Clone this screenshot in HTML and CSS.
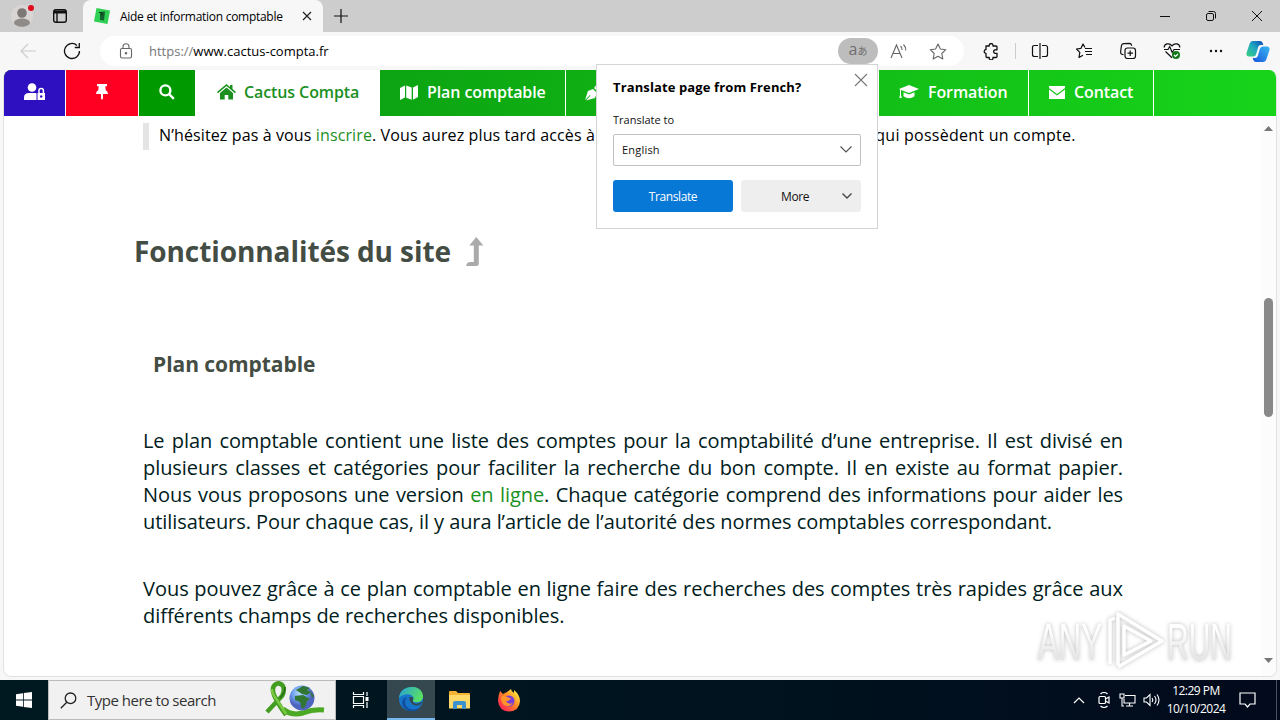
FILE: index.html
```html
<!DOCTYPE html>
<html lang="fr">
<head>
    <meta charset="UTF-8">
    <meta name="viewport" content="width=device-width, initial-scale=1.0">
    <title>Aide et information comptable</title>
    <link rel="stylesheet" href="styles.css">
</head>
<body>
    <!-- tabs -->
    <div class="tab-strip">
        <div class="profile">
            <svg width="26" height="30" viewBox="0 0 26 30"><circle cx="12" cy="15" r="11" fill="#d8d5d4"/><circle cx="12" cy="12" r="4.800" fill="#7d7876"/><path d="M4 22c0-6 16-6 16 0-2 5-14 5-16 0z" fill="#8f8b89"/><circle cx="21" cy="7" r="3" fill="#e00b1c"/></svg>
        </div>
        <div class="tab-menu">
            <svg width="16" height="16" viewBox="0 0 16 16" fill="none" stroke="#111" stroke-width="1.4"><rect x="1.7" y="1.7" width="12.6" height="12.6" rx="2.2"/><path d="M2 4h12" stroke-width="3"/><path d="M5 5v9"/></svg>
        </div>
        <div class="tab">
            <svg width="16" height="16" viewBox="0 0 16 16"><path d="M2.5 0L16 2.5 13.5 16 0 13.5z" fill="#2fd054"/><path d="M6 4l5-.5-1 9-4-.5z" fill="#12602b"/><path d="M5 4.5h3v3" fill="none" stroke="#0b3c1b"/></svg>
            <span class="tab-title">Aide et information comptable</span>
            <svg class="tab-close" width="10" height="10" viewBox="0 0 10 10" stroke="#222" stroke-width="1.2"><path d="M1 1l8 8M9 1l-8 8"/></svg>
        </div>
        <svg class="new-tab" width="14" height="14" viewBox="0 0 14 14" stroke="#111" stroke-width="1.2"><path d="M7 0v14M0 7h14"/></svg>
        <div class="window-buttons">
            <svg width="12" height="12" viewBox="0 0 12 12" stroke="#111"><path d="M1 6.500h10"/></svg>
            <svg width="12" height="12" viewBox="0 0 12 12" fill="none" stroke="#111"><rect x="1.500" y="3.500" width="7" height="7" rx="1.500"/><path d="M3.500 1.500h5q2 0 2 2v5"/></svg>
            <svg width="12" height="12" viewBox="0 0 12 12" stroke="#111"><path d="M1 1l10 10M11 1L1 11"/></svg>
        </div>
    </div>

    <!-- address bar -->
    <div class="toolbar">
        <div class="tool back"><svg width="18" height="16" viewBox="0 0 18 16" fill="none" stroke="#ccc" stroke-width="1.2"><path d="M17 8H2M9 1L2 8l7 7"/></svg></div>
        <div class="tool reload"><svg width="18" height="18" viewBox="0 0 18 18" fill="none" stroke="#111" stroke-width="1.3"><path d="M16.500 9A7.500 7.500 0 1 1 14 3.400M16.300 1v4.500h-4.500"/></svg></div>
        <div class="omnibox">
            <svg class="lock" width="14" height="16" viewBox="0 0 14 16" fill="none" stroke="#666" stroke-width="1.1"><rect x="1.500" y="5.500" width="11" height="9.500" rx="1.500"/><path d="M4 5.500V3.800a3 3 0 0 1 6 0v1.700"/><circle cx="7" cy="10.300" r=".7" fill="#666"/></svg>
            <span class="url"><span>https://</span>www.cactus-compta.fr</span>
            <div class="translate-pill"><span class="latin">a</span><span class="kana">あ</span></div>
            <svg class="read" width="18" height="16" viewBox="0 0 18 16" fill="none" stroke="#666" stroke-width="1.100"><path d="M1 15L6.500 2 12 15M3 10.500h7M10.500 3q1.700 1.500 1.500 4M13.500 1.500q2.500 2.500 2.300 6"/></svg>
            <svg class="star" width="18" height="17" viewBox="0 0 18 17" fill="none" stroke="#666" stroke-width="1.100" stroke-linejoin="round"><path d="M9 1l2.400 5 5.400.7-4 3.800 1 5.400L9 13.300 4.200 15.900l1-5.400-4-3.800 5.400-.7z"/></svg>
        </div>
        <div class="tool puzzle"><svg width="16" height="17" viewBox="0 0 16 17" fill="none" stroke="#111" stroke-width="1.300" stroke-linejoin="round"><path d="M3 3h3.300a1.900 1.900 0 1 1 3.600 0H13q1 0 1 1v2.800h-1.200a1.800 1.800 0 1 0 0 3.500H14V13.500q0 1-1 1H9.900a1.900 1.900 0 1 1-3.600 0H4q-1 0-1-1v-3.200a1.800 1.800 0 1 1 0-3.600z"/></svg></div>
        <div class="separator"></div>
        <div class="tool"><svg width="18" height="16" viewBox="0 0 18 16" fill="none" stroke="#111" stroke-width="1.200"><path d="M9 0v16M7 2.500H3.500q-2 0-2 2v7q0 2 2 2H7M11 2.500h3.500q2 0 2 2v7q0 2-2 2H11"/></svg></div>
        <div class="tool"><svg width="18" height="16" viewBox="0 0 18 16" fill="none" stroke="#111" stroke-width="1.200" stroke-linejoin="round"><path d="M10 4.500L8 1 6 5.300l-4.500.7 3.300 3.300L4 14.500l4-2.300M10 5.500h7M10 8.500h7M11 11.500h6"/></svg></div>
        <div class="tool"><svg width="18" height="18" viewBox="0 0 18 18" fill="none" stroke="#111" stroke-width="1.200"><rect x="6" y="6" width="10.500" height="10.500" rx="2.500"/><path d="M11.200 8.500v5.500M8.500 11.200H14M4.500 12.800l-1.300-.4q-1.700-.6-1.600-2.400L2.400 3.800q.3-2 2.200-2.200l5.800-.3q2 0 2.300 2.400"/></svg></div>
        <div class="tool"><svg width="18" height="18" viewBox="0 0 18 18" fill="none" stroke="#111" stroke-width="1.200"><path d="M1 7.500h4l1.700-3 2.500 6 1.800-3h6M1.200 5.500C1 1.500 6.500.5 9 3.800 11.500.5 17 1.500 16.800 5.500M2.500 9.500L9 15.800"/><circle cx="13" cy="13" r="4" fill="#117a18" stroke="none"/><path d="M11 13l1.500 1.500L15 12" stroke="#fff"/></svg></div>
        <div class="tool"><svg width="14" height="4" viewBox="0 0 14 4" fill="#111"><circle cx="2" cy="2" r="1.200"/><circle cx="7" cy="2" r="1.200"/><circle cx="12" cy="2" r="1.200"/></svg></div>
        <div class="tool copilot">
            <svg width="24" height="23" viewBox="0 0 24 23">
                <defs>
                    <linearGradient id="cp1" x1="0" y1="1" x2="1" y2="0"><stop offset="0" stop-color="#3bd17d"/><stop offset=".5" stop-color="#20a9bf"/><stop offset="1" stop-color="#0a49b8"/></linearGradient>
                    <linearGradient id="cp2" x1="0" y1="1" x2="1" y2="0"><stop offset="0" stop-color="#1b55dd"/><stop offset="1" stop-color="#35b8f0"/></linearGradient>
                </defs>
                <path d="M7 1h7q2 0 2.700 2l.6 2h-2.500q-2 0-2.600 2l-2 7q-.7 2.500-3 2.500H3q-3 0-2.500-3.500L3.500 4Q4.500 1 7 1z" fill="url(#cp1)"/>
                <path d="M17 22h-7q-2 0-2.700-2l-.6-2h2.500q2 0 2.600-2l2-7q.7-2.500 3-2.500H21q3 0 2.500 3.500L20.500 19q-1 3-3.500 3z" fill="url(#cp2)"/>
            </svg>
        </div>
    </div>

    <!-- website -->
    <div class="page">
        <nav class="menu">
            <a class="item account"><svg width="22" height="18" viewBox="0 0 22 18" fill="#fff"><circle cx="8" cy="4.500" r="4.300"/><path d="M0 17v-2.500Q0 10 5 10h6q1 0 1.500.3V17z"/><path d="M13.500 10h7.500v7h-7.500z"/><path d="M15 10V7.500q0-2 2.200-2t2.200 2V10" fill="none" stroke="#fff" stroke-width="1.500"/><circle cx="17.200" cy="13.500" r="1.200" fill="#2f10c0"/></svg></a>
            <a class="item pin"><svg width="12" height="16" viewBox="0 0 12 16" fill="#fff"><path d="M1 0h10v2.300H9.300L9.700 6Q12 7.300 12 10H7v4.500L6 16l-1-1.500V10H0q0-2.700 2.300-4l.4-3.700H1z"/></svg></a>
            <a class="item search"><svg width="16" height="16" viewBox="0 0 17 17" fill="none" stroke="#fff" stroke-width="2.500"><circle cx="6.800" cy="6.800" r="5.300"/><path d="M10.500 10.500l5.300 5.300"/></svg></a>
            <a class="item home"><svg width="19" height="16" viewBox="0 0 19 16" fill="#1b901f"><path d="M0 8l9.500-8L13 3V1h2.500v4L19 8l-1 1.200L9.500 2 1 9.200z"/><path d="M3 9l6.500-5.400L16 9v6.500h-4.700V11H7.700v4.500H3z"/></svg><span>Cactus Compta</span></a>
            <a class="item plan"><svg width="18" height="15" viewBox="0 0 18 15" fill="#fff"><path d="M0 3l5-2.500v12L0 15zM6.200.5l5.500 2v12.200l-5.500-2zM13 2.500L18 0v12l-5 2.700z"/></svg><span>Plan comptable</span></a>
            <a class="item write"><svg width="18" height="18" viewBox="0 0 18 18" fill="#fff"><path d="M0 17L3 8l5-2 4 4-2 5-9 2.500 4.500-5L5 12zM9 5l3-4 5 5-4 3z"/></svg></a>
            <a class="item training"><svg width="20" height="14" viewBox="0 0 20 14" fill="#fff"><path d="M10 0l10 4-10 4L2 5v5l.8 3H.3L1 10V4.500L0 4z"/><path d="M4.500 7.200L10 9.400l5.500-2.200v4q-5.500 4-11 0z"/></svg><span>Formation</span></a>
            <a class="item contact"><svg width="16" height="13" viewBox="0 0 16 13" fill="#fff"><path d="M0 0h16v2L8 8 0 2z"/><path d="M0 3.500L8 9.500l8-6V13H0z"/></svg><span>Contact</span></a>
        </nav>

        <div class="content">
            <blockquote>N’hésitez pas à vous <a>inscrire</a>. Vous aurez plus tard accès à <span class="quote-end">qui possèdent un compte.</span></blockquote>
            <h2>Fonctionnalités du site <svg width="18" height="29" viewBox="0 0 18 29" fill="#aaa"><path d="M10.300 0L17.300 8.500h-4.500V26.500q0 2.500-2.500 2.500H0q1-4 4-4h3.800V8.500H3.300z"/></svg></h2>
            <h3>Plan comptable</h3>
            <p>Le plan comptable contient une liste des comptes pour la comptabilité d’une entreprise. Il est divisé en plusieurs classes et catégories pour faciliter la recherche du bon compte. Il en existe au format papier. Nous vous proposons une version <a>en ligne</a>. Chaque catégorie comprend des informations pour aider les utilisateurs. Pour chaque cas, il y aura l’article de l’autorité des normes comptables correspondant.</p>
            <p>Vous pouvez grâce à ce plan comptable en ligne faire des recherches des comptes très rapides grâce aux différents champs de recherches disponibles.</p>
        </div>

        <div class="scrollbar">
            <svg width="9" height="5" viewBox="0 0 9 5" fill="#777"><path d="M4.500 0L9 5H0z"/></svg>
            <div class="thumb"></div>
            <svg width="9" height="5" viewBox="0 0 9 5" fill="#777"><path d="M0 0h9L4.500 5z"/></svg>
        </div>
    </div>

    <!-- translate popup -->
    <div class="popup">
        <svg class="popup-close" width="14" height="14" viewBox="0 0 14 14" stroke="#777" stroke-width="1.100"><path d="M1 1l12 12M13 1L1 13"/></svg>
        <strong>Translate page from French?</strong>
        <label>Translate to</label>
        <div class="select"><span>English</span><svg width="12" height="7" viewBox="0 0 12 7" fill="none" stroke="#555" stroke-width="1.200"><path d="M.5.500L6 6 11.500.500"/></svg></div>
        <div class="popup-buttons">
            <div class="button primary">Translate</div>
            <div class="button more"><span>More</span><svg width="10" height="6" viewBox="0 0 10 6" fill="none" stroke="#444" stroke-width="1.400"><path d="M.5.500L5 5 9.500.500"/></svg></div>
        </div>
    </div>

    <svg class="watermark" width="204" height="66" viewBox="0 0 204 66">
        <defs><linearGradient id="wm" x1="0" y1="0" x2="0" y2="1"><stop offset=".3" stop-color="#fff"/><stop offset=".6" stop-color="#eee"/><stop offset="1" stop-color="#dcdcdc"/></linearGradient></defs>
        <text x="4" y="52" textLength="64" lengthAdjust="spacingAndGlyphs">ANY</text>
        <path d="M76 56V12L81 10M84 57V6l44 27-44 26M90 47V18l27 15z" fill="none" stroke="#fff" stroke-width="3.500" stroke-linejoin="round"/>
        <text x="133" y="52" textLength="65" lengthAdjust="spacingAndGlyphs">RUN</text>
    </svg>

    <!-- taskbar -->
    <div class="taskbar">
        <div class="start"><svg width="16" height="16" viewBox="0 0 16 16" fill="#fff"><path d="M0 2.200l7-1v6.400H0zM7.800 1.100L16 0v7.600H7.800zM0 8.400h7v6.400l-7-1zM7.800 8.400H16V16l-8.200-1.100z"/></svg></div>
        <div class="search-box">
            <svg width="17" height="17" viewBox="0 0 17 17" fill="none" stroke="#222" stroke-width="1.300"><circle cx="10.500" cy="6.300" r="5.300"/><path d="M6.800 10.200L.8 16.200"/></svg>
            <span>Type here to search</span>
            <svg class="ribbon" width="62" height="38" viewBox="0 0 62 38">
                <defs><radialGradient id="globe" cx=".4" cy=".3"><stop offset="0" stop-color="#b8dcff"/><stop offset=".6" stop-color="#6b9cec"/><stop offset="1" stop-color="#4f65bd"/></radialGradient></defs>
                <path d="M2 31L17 15Q20 10 18 5 15 1 11 3 6 6 9 14 13 23 21 34" fill="none" stroke="#439d20" stroke-width="4.500"/>
                <path d="M18 28q8 7 20 4 10-4 21-3" fill="none" stroke="#4ba923" stroke-width="5"/>
                <path d="M7 8q0 5 5 11l9 14" fill="none" stroke="#7ac943" stroke-width="2.500"/>
                <path d="M20 6q0 6-5 11" fill="none" stroke="#286d15" stroke-width="1.500"/>
                <circle cx="37" cy="17" r="12.500" fill="url(#globe)"/>
                <path d="M31 9l7-4 7 2-3 2 4 2-4 3-5-1zM30 15l8-1 7 4-3 2-2 6-3 2-2-7-5-2zM45 10l4 5-2 2z" fill="#327633"/>
            </svg>
        </div>
        <div class="task task-view"><svg width="18" height="16" viewBox="0 0 18 16" fill="none" stroke="#fff" stroke-width="1.200"><path d="M1.500 0v2.500h10V0M1.500 16v-2.500h10V16M1.500 4.500h10v7h-10zM15 0v4M15 10v6"/><path d="M15 5v4" stroke-width="3"/></svg></div>
        <div class="task active">
            <svg width="24" height="24" viewBox="0 0 24 24">
                <defs><linearGradient id="eg" x1="0" y1="0" x2="1" y2=".4"><stop offset="0" stop-color="#249fd8"/><stop offset="1" stop-color="#58df66"/></linearGradient></defs>
                <circle cx="12" cy="12" r="12" fill="#1774cb"/>
                <path d="M0 11C1-3 23-4 24 9c.3 5-4 7-8.500 6-3-.5-1-2-1-4C14 7 5 5 0 11z" fill="url(#eg)"/>
                <path d="M8 10c-6 8 4 17 13 10-4 7-14 5-17-1-2-5 0-8 4-9z" fill="#124f9e"/>
                <path d="M10 11q2-2 4.500 0-2 4 1 5.500 4 1 7.500-2-.5 4-6 4-6-1-7-7.500z" fill="#36484f"/>
            </svg>
        </div>
        <div class="task">
            <svg width="22" height="18" viewBox="0 0 22 18"><path d="M0 1q0-1 1-1h6l2 2h11q1 0 1 1v14H0z" fill="#f4b333"/><path d="M0 4h21v13.500H0z" fill="#ffda69"/><path d="M4 18v-6q0-2 2-2h9q2 0 2 2v6h-4v-4H8v4z" fill="#3c92cf"/></svg>
        </div>
        <div class="task">
            <svg width="24" height="24" viewBox="0 0 24 24">
                <defs><linearGradient id="ff" x1="1" y1="0" x2="0" y2="1"><stop offset=".1" stop-color="#fff044"/><stop offset=".45" stop-color="#ff8a25"/><stop offset=".8" stop-color="#ff334e"/></linearGradient></defs>
                <path d="M3 3l3 3 4-2 4-3q0 2 3 4V2q6 5 6 11-.5 10-11 10.500Q2 23 1 13q0-5 2-10z" fill="url(#ff)"/>
                <circle cx="12" cy="13" r="5.500" fill="#773ed8"/><path d="M4 9q3-3 6 0 2 1 4 1-1 3-5 3 2 4 7 2-3 5-9 2-3-3-3-8z" fill="#ff942a"/>
            </svg>
        </div>
        <div class="tray">
            <svg width="12" height="8" viewBox="0 0 12 8" fill="none" stroke="#fff" stroke-width="1.200"><path d="M1 7l5-5 5 5"/></svg>
            <svg width="12" height="16" viewBox="0 0 12 16" fill="none" stroke="#fff" stroke-width="1.200"><rect x="1" y="4.500" width="6.500" height="7" rx="1"/><path d="M7.500 7L11 5v6L7.500 9M2.500 2Q6-1 9.500 2M2.500 14q3.500 3 7 0"/></svg>
            <svg width="17" height="14" viewBox="0 0 17 14" fill="none" stroke="#fff" stroke-width="1.100"><path d="M6 2.500h10v7.500H5V6M10.500 10v3M7 13h7M1 1h4v4H1zM3 5v8h2"/></svg>
            <svg width="17" height="14" viewBox="0 0 17 14" fill="none" stroke="#fff" stroke-width="1.100"><path d="M1 5h2.500L7 1.500v11L3.500 9H1zM9 5q1.500 2 0 4M11.500 3q3 4 0 8M14 1.500q4 5.500 0 11"/></svg>
            <div class="clock"><span>12:29 PM</span><span>10/10/2024</span></div>
            <svg class="notice" width="17" height="16" viewBox="0 0 17 16" fill="none" stroke="#fff" stroke-width="1.200"><path d="M1 1h15v11h-5l-2.500 3L6 12H1z"/></svg>
            <div class="show-desktop"></div>
        </div>
    </div>
</body>
</html>
```

FILE: styles.css
```css
        * {
            box-sizing: border-box;
        }

        body {
            margin: 0;
            width: 1280px;
            height: 720px;
            overflow: hidden;
            background-color: #f7f7f7;
            font-family: "Open Sans", "Noto Sans", sans-serif;
            display: flex;
            flex-direction: column;
        }

        svg {
            display: block;
            flex-shrink: 0;
        }

        .tab-strip {
            height: 32px;
            background-color: #cdcdcd;
            display: flex;
            align-items: center;
        }

        .profile {
            width: 42px;
            padding-left: 10px;
        }

        .tab-menu {
            width: 41px;
            padding-left: 10px;
        }

        .tab {
            width: 240px;
            height: 32px;
            padding: 0 11px;
            background-color: #f7f7f7;
            border-radius: 8px 8px 0 0;
            display: flex;
            align-items: center;
            font-size: 12px;
        }

        .tab-title {
            margin-left: 10px;
            white-space: nowrap;
            letter-spacing: -0.28px;
        }

        .tab-close {
            margin-left: auto;
        }

        .new-tab {
            margin-left: 11px;
        }

        .window-buttons {
            margin-left: auto;
            padding-right: 17px;
            display: flex;
            gap: 34px;
        }

        .toolbar {
            height: 38px;
            display: flex;
            align-items: center;
        }

        .tool {
            width: 44px;
            display: flex;
            justify-content: center;
        }

        .back {
            width: 56px;
        }

        .reload {
            width: 32px;
            margin-right: 12px;
        }

        .omnibox {
            width: 864px;
            height: 30px;
            background-color: #fff;
            border-radius: 15px;
            display: flex;
            align-items: center;
        }

        .omnibox .lock {
            margin-left: 19px;
        }

        .url {
            margin-left: 16px;
            font-size: 13px;
        }

        .url span {
            color: #777;
        }

        .translate-pill {
            width: 40px;
            height: 26px;
            margin-left: auto;
            border-radius: 13px;
            background-color: #bdbdbd;
            color: #6e6e6e;
            display: flex;
            align-items: center;
            justify-content: center;
        }

        .latin {
            font-size: 16px;
            line-height: 20px;
            margin-top: -4px;
        }

        .kana {
            font-family: "Noto Sans CJK JP", sans-serif;
            font-size: 10px;
            line-height: 12px;
            margin-top: -1px;
        }

        .read {
            margin-left: 12px;
        }

        .star {
            margin: 0 17px 0 21px;
        }

        .puzzle {
            width: 54px;
        }

        .separator {
            width: 1px;
            height: 16px;
            margin: 0 2px 0 -3px;
            background-color: #ccc;
        }

        .copilot {
            width: 40px;
        }

        .page {
            height: 607px;
            margin: 0 3px;
            background-color: #fff;
            border: 1px solid #e2e2e2;
            border-top: 0;
            border-radius: 8px;
            display: grid;
            grid-template-columns: 1fr 15px;
            grid-template-rows: 46px 1fr;
            overflow: hidden;
            flex-shrink: 0;
        }

        .menu {
            grid-column: 1 / 3;
            display: flex;
            background: linear-gradient(90deg, #08900f, #17d41a);
        }

        .item {
            height: 46px;
            border-right: 1px solid #fff;
            display: flex;
            align-items: center;
            padding-bottom: 2px;
            color: #fff;
            font-size: 16px;
            font-weight: 600;
            letter-spacing: -0.1px;
            white-space: nowrap;
        }

        .account {
            width: 62px;
            padding-left: 20px;
            background-color: #2f10c0;
        }

        .pin {
            width: 73px;
            padding-left: 30px;
            background-color: #ff0022;
        }

        .search {
            width: 56px;
            padding-left: 20px;
            background-color: #009900;
            border-right: 0;
        }

        .home {
            width: 185px;
            padding-left: 22px;
            gap: 8px;
            background-color: #fff;
            color: #1b901f;
            border-right: 0;
        }

        .plan {
            width: 186px;
            padding-left: 20px;
            gap: 9px;
        }

        .write {
            width: 313px;
            padding-left: 19px;
        }

        .training {
            width: 150px;
            padding-left: 20px;
            gap: 9px;
        }

        .contact {
            width: 125px;
            padding-left: 20px;
            gap: 9px;
        }

        .content {
            padding: 7px 138px 0 139px;
            color: #002020;
        }

        .content a {
            color: #1b901f;
        }

        blockquote {
            margin: 0;
            height: 27px;
            padding-left: 10px;
            border-left: 6px solid #e4e4e4;
            color: #000;
            font-size: 16px;
            line-height: 25px;
            letter-spacing: 0.12px;
            white-space: nowrap;
        }

        .quote-end {
            margin-left: 276px;
            letter-spacing: 0.25px;
        }

        h2 {
            margin: 81px 0 0 -9px;
            height: 40px;
            display: flex;
            align-items: center;
            gap: 15px;
            color: #444d44;
            font-size: 28px;
            line-height: 40px;
            letter-spacing: -0.08px;
        }

        h3 {
            margin: 78px 0 0 10px;
            color: #444d44;
            font-size: 21px;
            line-height: 30px;
            letter-spacing: -0.05px;
        }

        p {
            margin: 48px 0 0;
            width: 980px;
            font-size: 20px;
            line-height: 27px;
            letter-spacing: -0.07px;
            text-align: justify;
        }

        p + p {
            margin-top: 40px;
            letter-spacing: -0.03px;
        }

        .scrollbar {
            background-color: #fcfcfc;
            display: flex;
            flex-direction: column;
            align-items: center;
            justify-content: space-between;
            padding: 10px 0 13px;
        }

        .thumb {
            width: 9px;
            height: 119px;
            margin-top: -75px;
            border-radius: 5px;
            background-color: #898989;
        }

        .popup {
            position: absolute;
            left: 596px;
            top: 64px;
            width: 282px;
            height: 165px;
            padding: 13px 16px 16px;
            background-color: #fff;
            border: 1px solid #d4d4d4;
            display: flex;
            flex-direction: column;
            font-size: 12px;
            color: #111;
        }

        .popup-close {
            position: absolute;
            right: 9px;
            top: 8px;
        }

        .popup strong {
            font-size: 13px;
            line-height: 19px;
            letter-spacing: 0.12px;
            color: #000;
        }

        .popup label {
            margin-top: 14px;
            font-size: 11px;
            line-height: 18px;
        }

        .select {
            height: 32px;
            margin-top: 5px;
            padding: 0 8px 2px;
            border: 1px solid #c2c2c2;
            border-radius: 2px;
            display: flex;
            align-items: center;
            justify-content: space-between;
            font-size: 11px;
            letter-spacing: 0.2px;
        }

        .popup-buttons {
            margin-top: 14px;
            display: flex;
            gap: 8px;
        }

        .button {
            width: 120px;
            height: 32px;
            border-radius: 3px;
            display: flex;
            align-items: center;
            letter-spacing: -0.4px;
        }

        .primary {
            justify-content: center;
            background-color: #0878d7;
            color: #fff;
        }

        .more {
            padding: 0 9px 0 40px;
            justify-content: space-between;
            background-color: #eee;
        }

        .watermark {
            position: absolute;
            left: 1034px;
            top: 608px;
            filter: drop-shadow(0 0 2px #bbb);
        }

        .watermark text {
            font-family: "Liberation Sans", sans-serif;
            font-size: 52px;
            fill: url(#wm);
        }

        .taskbar {
            height: 40px;
            margin-top: 3px;
            flex-shrink: 0;
            background: linear-gradient(90deg, #001820, #00131e 60%, #020a1c);
            display: flex;
            color: #fff;
        }

        .start {
            width: 48px;
            display: flex;
            align-items: center;
            justify-content: center;
        }

        .search-box {
            width: 288px;
            background-color: #f1f1f1;
            border: 1px solid #bbb;
            padding-left: 11px;
            display: flex;
            align-items: center;
            color: #333;
            font-size: 15px;
        }

        .search-box span {
            margin-left: 10px;
            width: 136px;
            white-space: nowrap;
            letter-spacing: -0.48px;
        }

        .ribbon {
            margin-left: 42px;
        }

        .task {
            width: 49px;
            display: flex;
            align-items: center;
            justify-content: center;
        }

        .task-view {
            margin-right: 2px;
        }

        .task.active {
            width: 48px;
            background-color: #36484f;
            border-bottom: 2px solid #76b9ed;
        }

        .tray {
            margin-left: auto;
            display: flex;
            align-items: center;
        }

        .tray > svg {
            margin-right: 7px;
        }

        .tray > svg:first-child {
            margin-right: 13px;
        }

        .tray > svg:nth-child(2) {
            margin-right: 9px;
        }

        .clock {
            width: 58px;
            display: flex;
            flex-direction: column;
            align-items: center;
            font-size: 12px;
            line-height: 18px;
            letter-spacing: -0.5px;
            white-space: nowrap;
        }

        .tray .notice {
            margin: 0 20px 0 14px;
        }

        .show-desktop {
            width: 4px;
            height: 40px;
            border-left: 1px solid #4b525f;
        }
```
